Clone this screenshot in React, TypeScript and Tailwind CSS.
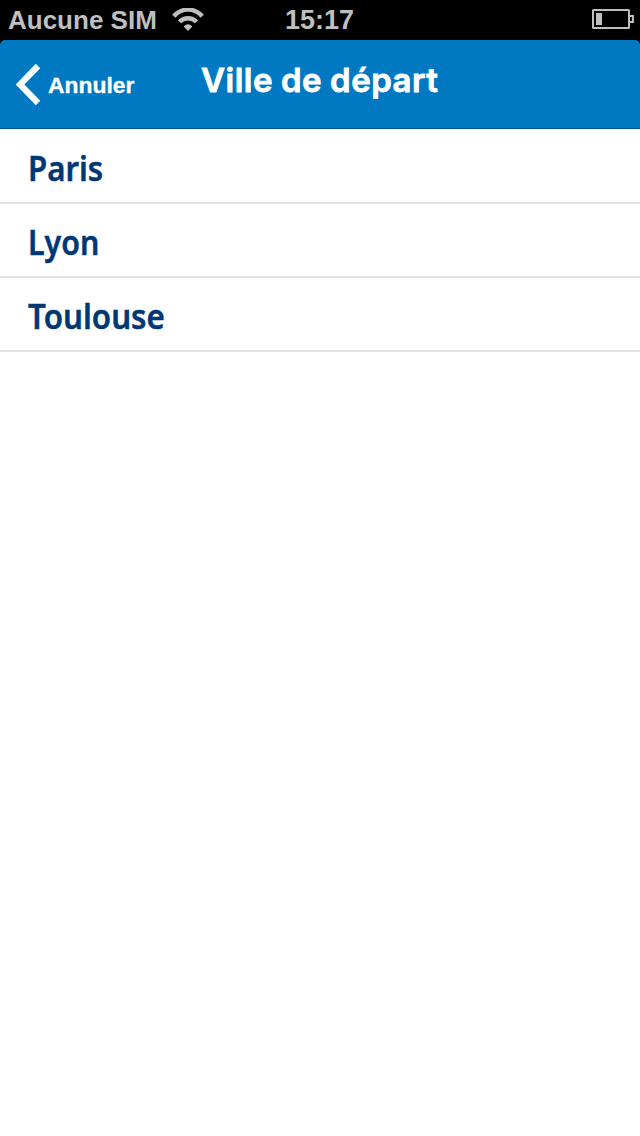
import React from 'react';

const cities = [
  { name: 'Paris', row: 'h-[75px] pt-[15px]', label: 'scale-x-[0.892]' },
  { name: 'Lyon', row: 'h-[74px] pt-[14px]', label: 'scale-x-[0.867]' },
  { name: 'Toulouse', row: 'h-[74px] pt-[14px]', label: 'scale-x-[0.895]' },
];

function WifiIcon() {
  return (
    <svg className="ml-[15px] mt-2 h-6 w-8" viewBox="0 0 32 24" fill="none">
      <path d="M1.8 8.2C9.8-.6 22.2-.6 30.2 8.2" stroke="#bfbfbf" strokeWidth="4.4" />
      <path d="M7.5 13.8C12.3 9 19.7 9 24.5 13.8" stroke="#bfbfbf" strokeWidth="4.4" />
      <path d="M11.6 18.4Q16 14.2 20.4 18.4L16 23Z" fill="#bfbfbf" />
    </svg>
  );
}

function BatteryIcon() {
  return (
    <svg className="mt-[9px] h-5 w-[42px]" viewBox="0 0 42 20" fill="none">
      <rect x="1" y="1" width="36" height="18" rx="0.6" stroke="#bfbfbf" strokeWidth="2" />
      <rect x="4" y="4" width="6" height="12" fill="#bfbfbf" />
      <path d="M38 7H40.9V13H38" stroke="#bfbfbf" strokeWidth="2" />
    </svg>
  );
}

function StatusBar() {
  return (
    <header className="grid h-10 grid-cols-[285px_1fr_auto] bg-black pr-[6px] font-['Liberation_Sans',sans-serif] font-bold text-[#bfbfbf]">
      <div className="flex pl-2">
        <span className="whitespace-nowrap text-[26px] leading-10">Aucune SIM</span>
        <WifiIcon />
      </div>
      <span className="text-[27px] leading-10">15:17</span>
      <BatteryIcon />
    </header>
  );
}

function NavBar() {
  return (
    <div className="bg-black">
      <nav className="flex h-[89px] rounded-t-[5px] border-b border-[#00529b] bg-[#0079c2] text-white">
        <button className="flex w-[201px] shrink-0 pl-4">
          <svg className="mt-[23px] h-[43px] w-6" viewBox="0 0 24 43" fill="none">
            <path d="M22 3L4 21.5L22 40" stroke="white" strokeWidth="6.2" />
          </svg>
          <span className="ml-2 mt-[30px] origin-left scale-x-[1.04] font-['Liberation_Sans',sans-serif] text-[22px] font-bold leading-8 [-webkit-text-stroke:0.3px_white]">Annuler</span>
        </button>
        <h1 className="mt-[16px] whitespace-nowrap font-['Inter',sans-serif] text-[33px] font-semibold leading-[48px] tracking-[0.5px] [word-spacing:-0.8px] [-webkit-text-stroke:0.8px_white]">Ville de départ</h1>
      </nav>
    </div>
  );
}

export default function App() {
  return (
    <main className="min-h-[1136px] w-full bg-white">
      <StatusBar />
      <NavBar />
      <ul className="flex flex-col">
        {cities.map((city) => (
          <li key={city.name} className={`border-b-2 border-[#e2e2e2] pl-7 ${city.row}`}>
            <span className={`inline-block origin-left font-['Noto_Sans',sans-serif] text-[35px] font-semibold leading-[48px] text-[#003875] [-webkit-text-stroke:0.5px_#003875] ${city.label}`}>{city.name}</span>
          </li>
        ))}
      </ul>
    </main>
  );
}
